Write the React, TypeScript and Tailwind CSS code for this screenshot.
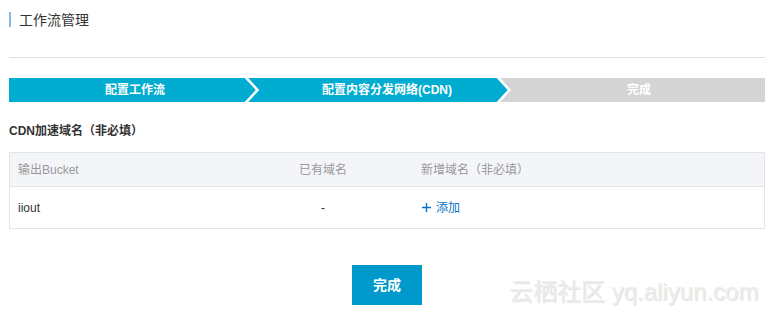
import React from 'react';

const FONT = { fontFamily: '"Liberation Sans", "Noto Sans CJK SC", sans-serif' };

const steps = [
  { label: '配置工作流', color: '#00acd0', next: '#00acd0' },
  { label: '配置内容分发网络(CDN)', color: '#00acd0', next: '#d4d4d4' },
  { label: '完成', color: '#d4d4d4', next: null },
];

// 步驟之間的白色箭頭
const Chevron: React.FC<{ left: string; right: string }> = ({ left, right }) => (
  <svg className="absolute right-0 top-0 z-10 h-full w-[17px]" viewBox="0 0 17 24" preserveAspectRatio="none">
    <rect x="0" y="0" width="17" height="24" fill={right} />
    <polygon points="0,0 1,0 13,12 1,24 0,24" fill={left} />
    <polyline points="1.5,-1 13.5,12 1.5,25" fill="none" stroke="#fff" strokeWidth="2.6" />
  </svg>
);

const App: React.FC = () => {
  return (
    <div className="relative h-[316px] w-[775px] overflow-hidden bg-white pl-[9px] pr-[10px] pt-[12px] text-[#333]" style={FONT}>
      <div className="flex h-[15px] items-center border-l-2 border-[#8ab8e0] pl-[8px] text-[14px] leading-none text-[#333]">
        工作流管理
      </div>

      <div className="mt-[30px] h-px bg-[#e0e0e0]" />

      <div className="mt-[20px] flex h-[24px]">
        {steps.map((s) => (
          <div
            key={s.label}
            className="relative flex flex-1 items-center justify-center text-[12px] font-bold text-white"
            style={{ backgroundColor: s.color }}
          >
            <span className="relative z-20">{s.label}</span>
            {s.next && <Chevron left={s.color} right={s.next} />}
          </div>
        ))}
      </div>

      <div className="mt-[20px] text-[12px] font-bold leading-[18px] text-[#333]">CDN加速域名（非必填）</div>

      <div className="mt-[12px] border border-[#e3e5ea] text-[12px]">
        <div className="grid h-[34px] grid-cols-[215px_196px_1fr] items-center border-b border-[#e3e5ea] bg-[#f4f5f9] text-[#999]">
          <div className="pl-[8px]">输出Bucket</div>
          <div className="text-center">已有域名</div>
          <div>新增域名（非必填）</div>
        </div>
        <div className="grid h-[41px] grid-cols-[215px_196px_1fr] items-center text-[#333]">
          <div className="pl-[8px]">iiout</div>
          <div className="text-center">-</div>
          <div className="flex items-center gap-[5px] pl-[1px] text-[#0a73c9]">
            <svg width="9" height="9" viewBox="0 0 9 9">
              <path d="M4.5 0v9M0 4.5h9" stroke="currentColor" strokeWidth="1.4" />
            </svg>
            <span>添加</span>
          </div>
        </div>
      </div>

      <div className="mt-[36px] flex justify-center">
        <button className="flex h-[40px] w-[70px] items-center justify-center bg-[#0099cc] text-[14px] font-bold text-white">
          完成
        </button>
      </div>

      <div
        className="absolute left-[509px] top-[278px] whitespace-nowrap text-[24px] leading-[28px] text-[#ececec]"
        style={{ textShadow: '1px 1px 1px rgba(0,0,0,0.12)' }}
      >
        云栖社区 yq.aliyun.com
      </div>
    </div>
  );
};

export default App;
